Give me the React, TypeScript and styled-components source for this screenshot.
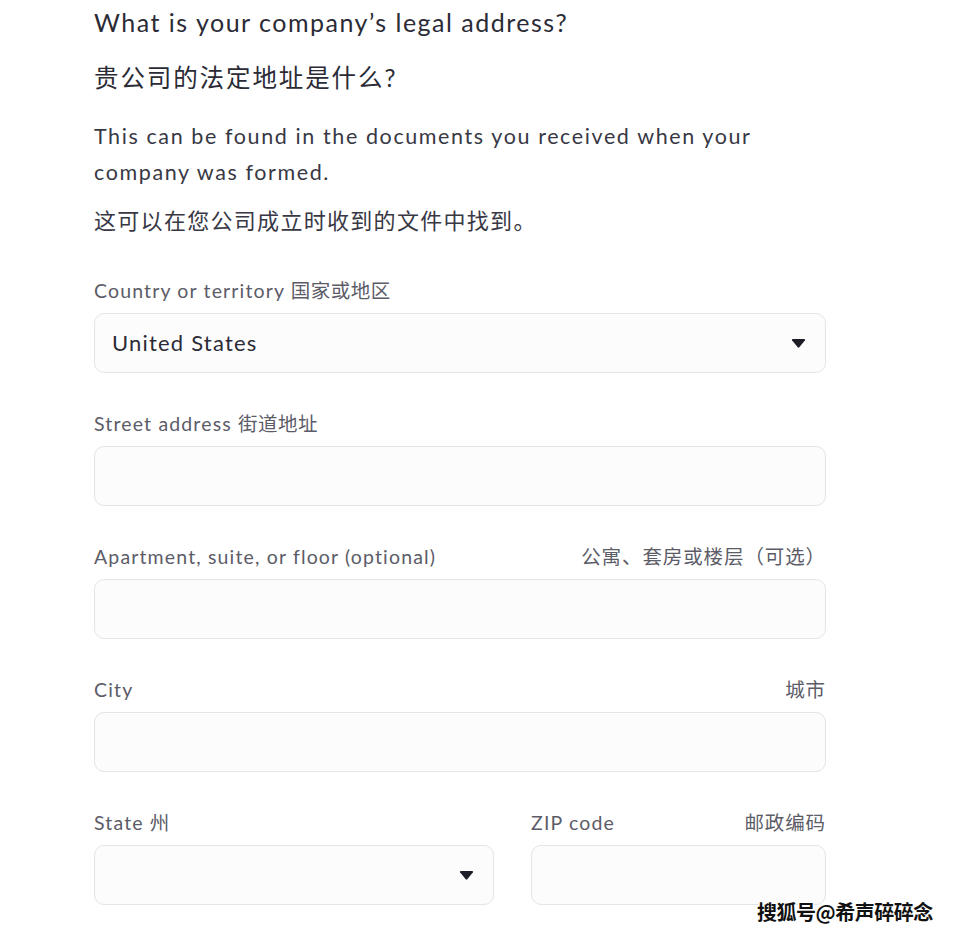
import React from "react";
import styled, { createGlobalStyle } from "styled-components";

const Global = createGlobalStyle`
  html, body { margin: 0; padding: 0; background: #ffffff; }
  body { font-family: Lato, "Noto Sans CJK SC", sans-serif; }
  * { box-sizing: border-box; }
`;

const Page = styled.div`
  position: relative;
  width: 953px;
  height: 934px;
  overflow: hidden;
  padding-left: 94px;
`;

const Column = styled.div`
  width: 732px;
  display: flex;
  flex-direction: column;
`;

const Title = styled.h1`
  margin: 0;
  font-family: Lato, "Noto Sans CJK SC", sans-serif;
  font-weight: 400;
  font-size: 25px;
  line-height: 44px;
  color: #2b2b36;
  letter-spacing: 1.5px;
`;

const TitleCn = styled(Title)`
  margin-top: 12px;
  font-size: 24.5px;
  letter-spacing: 1.9px;
`;

const Para = styled.p`
  margin: 18px 0 0;
  font-family: Lato, "Noto Sans CJK SC", sans-serif;
  font-size: 21.5px;
  line-height: 36px;
  color: #383845;
  letter-spacing: 1.6px;
  width: 700px;
`;

const ParaCn = styled(Para)`
  margin-top: 13px;
  font-size: 22px;
  letter-spacing: 1.3px;
`;

const Form = styled.div`
  margin-top: 40px;
  display: flex;
  flex-direction: column;
  gap: 39px;
`;

const Field = styled.div`
  display: flex;
  flex-direction: column;
  gap: 10px;
`;

const Label = styled.div<{ $split?: boolean }>`
  display: flex;
  justify-content: ${(p) => (p.$split ? "space-between" : "flex-start")};
  font-family: Lato, "Noto Sans CJK SC", sans-serif;
  font-size: 19.5px;
  line-height: 24px;
  color: #5c5c68;
  letter-spacing: 1.15px;
`;

const CnPart = styled.span`
  letter-spacing: 0.5px;
`;

const CnRight = styled(CnPart)`
  letter-spacing: 0.9px;
`;

const Box = styled.div`
  position: relative;
  height: 60px;
  border: 1px solid #e4e4ea;
  border-radius: 10px;
  background: #fcfcfd;
  display: flex;
  align-items: center;
  padding: 0 17px;
`;

const Value = styled.span`
  font-family: Lato, sans-serif;
  font-size: 22px;
  color: #2b2b36;
  letter-spacing: 1.2px;
  flex: 1;
  margin-top: -2px;
`;

const Caret = styled.svg`
  width: 15px;
  height: 9px;
  margin-right: 2px;
`;

const Row = styled.div`
  display: grid;
  grid-template-columns: 400px 1fr;
  gap: 37px;
`;

const Watermark = styled.div`
  position: absolute;
  left: 757px;
  top: 899px;
  font-family: "Noto Sans CJK SC", sans-serif;
  font-weight: 700;
  font-size: 20px;
  line-height: 26px;
  color: #111;
  letter-spacing: -0.5px;
  text-shadow: 1px 0 0 #fff, -1px 0 0 #fff, 0 1px 0 #fff, 0 -1px 0 #fff,
    1px 1px 0 #fff, -1px -1px 0 #fff, 1px -1px 0 #fff, -1px 1px 0 #fff;
`;

const CaretIcon = () => (
  <Caret viewBox="0 0 15 9">
    <path d="M1 1.2 Q0.6 0 2 0 H13 Q14.4 0 14 1.2 L8.3 8.3 Q7.5 9.2 6.7 8.3 Z" fill="#1d1d28" />
  </Caret>
);

export default function App() {
  return (
    <Page>
      <Global />
      <Column>
        <Title>What is your company’s legal address?</Title>
        <TitleCn>贵公司的法定地址是什么?</TitleCn>
        <Para>This can be found in the documents you received when your company was formed.</Para>
        <ParaCn>这可以在您公司成立时收到的文件中找到。</ParaCn>
        <Form>
          <Field>
            <Label>
              <span>
                Country or territory <CnPart>国家或地区</CnPart>
              </span>
            </Label>
            <Box>
              <Value>United States</Value>
              <CaretIcon />
            </Box>
          </Field>
          <Field>
            <Label>
              <span>
                Street address <CnPart>街道地址</CnPart>
              </span>
            </Label>
            <Box />
          </Field>
          <Field>
            <Label $split>
              <span>Apartment, suite, or floor (optional)</span>
              <CnRight>公寓、套房或楼层（可选）</CnRight>
            </Label>
            <Box />
          </Field>
          <Field>
            <Label $split>
              <span>City</span>
              <CnRight>城市</CnRight>
            </Label>
            <Box />
          </Field>
          <Row>
            <Field>
              <Label>
                <span>
                  State <CnPart>州</CnPart>
                </span>
              </Label>
              <Box>
                <Value />
                <CaretIcon />
              </Box>
            </Field>
            <Field>
              <Label $split>
                <span>ZIP code</span>
                <CnRight>邮政编码</CnRight>
              </Label>
              <Box />
            </Field>
          </Row>
        </Form>
      </Column>
      <Watermark>搜狐号@希声碎碎念</Watermark>
    </Page>
  );
}
